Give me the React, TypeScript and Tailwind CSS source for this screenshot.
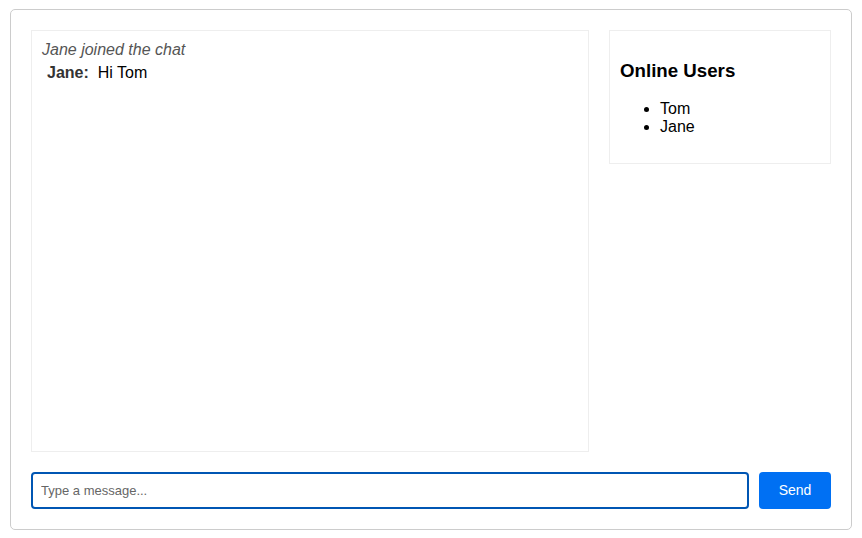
import React from 'react';

const users = ['Tom', 'Jane'];

export default function App() {
  return (
    <div className="min-h-screen bg-white font-['Liberation_Sans',Arial,sans-serif] text-black">
      <div className="mx-[10px] mt-[9px] w-[842px] rounded-[5px] border border-[#ccc] p-5">
        <div className="flex gap-5">
          {/* Chat messages */}
          <div className="h-[422px] flex-1 border border-[#eee] p-[10px] text-base leading-[1.15]">
            <div className="italic text-[#555]">Jane joined the chat</div>
            <div className="px-[5px] pt-[5px]">
              <span className="font-bold text-[#333]">Jane:</span>
              <span className="ml-[9px]">Hi Tom</span>
            </div>
          </div>

          {/* Sidebar */}
          <div className="w-[222px] self-start border border-[#eee] p-[10px]">
            <h3 className="mt-[19px] text-[18.7px] font-bold leading-[22px]">
              Online Users
            </h3>
            <ul className="mb-[17px] mt-[18px] list-disc pl-10 text-base leading-[18px]">
              {users.map((u) => (
                <li key={u}>{u}</li>
              ))}
            </ul>
          </div>
        </div>

        {/* Input row */}
        <div className="mt-5 flex gap-[10px]">
          <input
            type="text"
            placeholder="Type a message..."
            className="h-[37px] flex-1 rounded-[4px] border-2 border-[#0056b3] px-[8px] text-[13px] outline-none placeholder:text-[#666]"
          />
          <button
            type="button"
            className="h-[37px] w-[72px] rounded-[4px] bg-[#0070f3] text-[14px] font-medium text-white"
          >
            Send
          </button>
        </div>
      </div>
    </div>
  );
}
